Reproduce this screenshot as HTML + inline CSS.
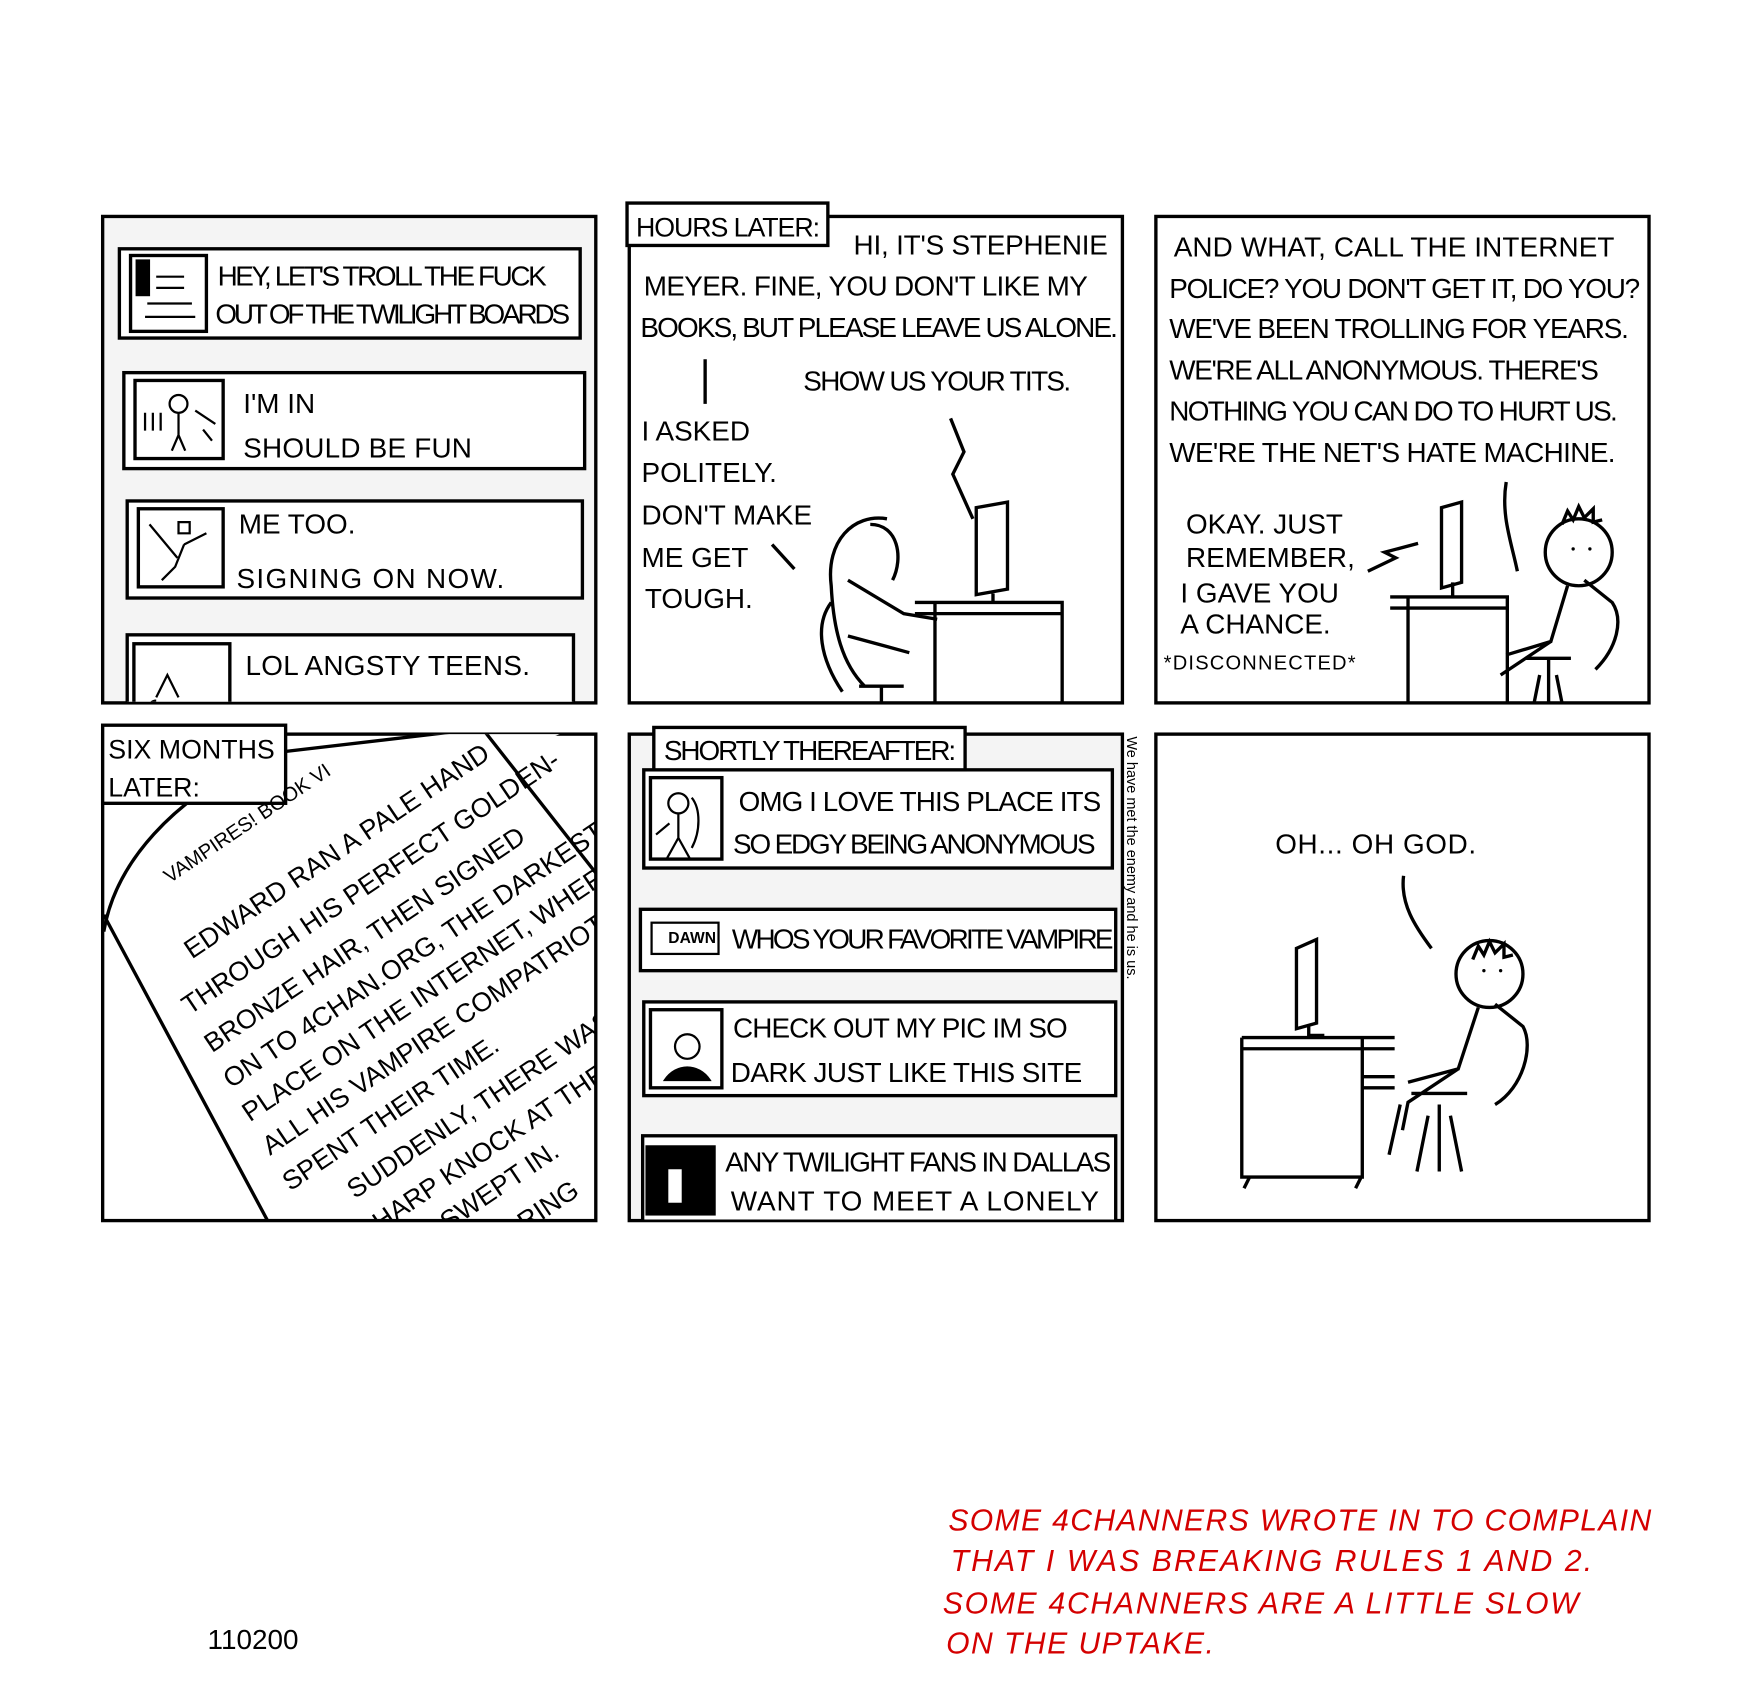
<!DOCTYPE html>
<html><head><meta charset="utf-8"><style>
html,body{margin:0;padding:0;background:#fff;width:1750px;height:1700px;overflow:hidden}
svg{display:block}
text{font-family:"Liberation Sans",sans-serif;fill:#000}
</style></head><body>
<svg width="1750" height="1700" viewBox="0 0 1568.5 1523.7" xmlns="http://www.w3.org/2000/svg">
<defs>
<clipPath id="c4"><rect x="93" y="658" width="441" height="435"/></clipPath>
<clipPath id="c1"><rect x="93" y="194" width="441" height="435"/></clipPath>
<clipPath id="c5"><rect x="565" y="658" width="441" height="435"/></clipPath>
</defs>
<g fill="none" stroke="#000" stroke-width="3">
<rect x="92" y="194" width="442" height="436" fill="#f4f4f4"/>
<g clip-path="url(#c1)">
<rect x="107" y="223" width="413" height="80" fill="#fff"/>
<rect x="117" y="229" width="68" height="68"/>
<rect x="123" y="234" width="10" height="30" fill="#000"/>
<path d="M140 248h25M140 258h25M132 272h40M130 284h45" stroke-width="2"/>
<rect x="111" y="334" width="413" height="86" fill="#fff"/>
<rect x="121" y="341" width="79" height="70"/>
<circle cx="160" cy="362" r="8" stroke-width="2"/><path d="M160 370l0 20l-6 14M160 390l6 14M130 370v16M137 370v16M144 370v16M175 368l18 12M182 385l8 10" stroke-width="2"/>
<rect x="114" y="449" width="408" height="87" fill="#fff"/>
<rect x="124" y="456" width="76" height="70"/>
<path d="M134 470l25 30M160 478h10v-10h-10zM165 488l-8 20l-12 12M165 488l20-10" stroke-width="2"/>
<rect x="114" y="569" width="400" height="70" fill="#fff"/>
<rect x="120" y="577" width="86" height="60"/>
<path d="M140 625l10-20l10 20M140 628c-5 0-8 5-6 10" stroke-width="2"/>
</g>
<rect x="564" y="194" width="442" height="436"/>
<rect x="562" y="182" width="180" height="38" fill="#fff"/>
<path d="M632 322v40M852 375l12 30l-10 20l18 40M692 488l20 22"/>
<path d="M820 540h132v90M838 540v90M820 550h132"/>
<path d="M875 455l28-5v78l-28 5zM890 532v8"/>
<path d="M795 465c-30-5-55 20-50 60c2 40 10 70 30 90M780 470c25 0 30 30 20 50M760 520l50 30l30 5M760 570l55 15M745 540c-15 20-10 50 10 80M770 615h40M790 615v15" />
<rect x="1036" y="194" width="442" height="436"/>
<path d="M1350 432c-5 30 5 55 10 80M1226 512l25-12l-10-5l30-8"/>
<path d="M1246 535h105v95M1262 535v95M1246 545h105"/>
<path d="M1292 455l18-5v72l-18 5zM1302 522v12"/>
<circle cx="1415" cy="495" r="30"/>
<path d="M1405 525l-15 50l-40 12M1390 575l-45 30M1420 520l25 20c10 15 5 40-15 60M1368 590h40M1388 590v40M1375 630l5-25M1400 630l-5-25M1400 470l5-12 5 8 5-12 5 10 8-8 0 12 8-2"/>
<rect x="92" y="658" width="442" height="436"/>
<g clip-path="url(#c4)">
<path d="M93 835c10-60 60-120 150-160l300-35M93 820l150 280" fill="#fff"/>
<path d="M430 650l110 140"/>
</g>
<rect x="92" y="650" width="164" height="70" fill="#fff"/>
<rect x="564" y="658" width="442" height="436" fill="#f4f4f4"/>
<g clip-path="url(#c5)">
<rect x="577" y="690" width="420" height="88" fill="#fff"/>
<rect x="583" y="697" width="64" height="73"/>
<circle cx="608" cy="720" r="9" stroke-width="2"/><path d="M608 729v22l-10 18M608 751l10 18M600 738l-12 10M620 715c8 10 8 30 0 45" stroke-width="2"/>
<rect x="574" y="815" width="426" height="55" fill="#fff"/>
<rect x="584" y="827" width="60" height="28" stroke-width="2"/>
<rect x="577" y="898" width="423" height="84" fill="#fff"/>
<rect x="583" y="905" width="64" height="70"/>
<circle cx="616" cy="938" r="11" stroke-width="2"/><path d="M596 968c10-15 30-15 40 0h-40z" fill="#000" stroke-width="2"/>
<rect x="576" y="1018" width="424" height="90" fill="#fff"/>
<rect x="580" y="1028" width="60" height="60" fill="#000"/>
</g>
<rect x="586" y="652" width="279" height="38" fill="#fff"/>
<rect x="1036" y="658" width="442" height="436"/>
<path d="M1258 785c-3 25 10 45 25 65"/>
<path d="M1113 930h137M1113 940h137M1113 930v125h108v-125M1120 1055l-5 10M1220 1055l-5 10M1222 965h28M1222 975h28"/>
<path d="M1162 850l18-8v75l-18 5zM1173 918v10h14"/>
<circle cx="1335" cy="873" r="30"/>
<path d="M1325 903l-18 55l-45 12M1307 958l-45 30l-5 25M1340 900l25 20c10 18 0 55-25 70M1265 980h50M1290 990v60M1270 1050l10-50M1310 1050l-10-50M1245 1035l10-45M1320 860l5-12 5 8 5-12 5 10 8-8 0 12 8-2"/>
</g>
<circle cx="1330" cy="870" r="1.5"/><circle cx="1345" cy="870" r="1.5"/>
<circle cx="1410" cy="492" r="1.5"/><circle cx="1425" cy="492" r="1.5"/>
<rect x="599" y="1048" width="12" height="30" fill="#fff"/>
<text x="599" y="845" font-size="14" font-weight="bold">DAWN</text>

<g font-size="25">
<text x="195" y="256" textLength="295">HEY, LET'S TROLL THE FUCK</text>
<text x="193" y="290" textLength="318">OUT OF THE TWILIGHT BOARDS</text>
<text x="218" y="370">I'M IN</text>
<text x="218" y="410" textLength="205">SHOULD BE FUN</text>
<text x="214" y="478">ME TOO.</text>
<text x="212" y="527" textLength="240">SIGNING ON NOW.</text>
<text x="220" y="605" textLength="255">LOL ANGSTY TEENS.</text>
<text x="570" y="212" font-size="24" textLength="165">HOURS LATER:</text>
<text x="765" y="228" textLength="228">HI, IT'S STEPHENIE</text>
<text x="577" y="265" textLength="398">MEYER. FINE, YOU DON'T LIKE MY</text>
<text x="574" y="302" textLength="428">BOOKS, BUT PLEASE LEAVE US ALONE.</text>
<text x="720" y="350" textLength="240">SHOW US YOUR TITS.</text>
<text x="575" y="395">I ASKED</text>
<text x="575" y="432">POLITELY.</text>
<text x="575" y="470">DON'T MAKE</text>
<text x="575" y="508">ME GET</text>
<text x="578" y="545">TOUGH.</text>
<text x="1052" y="230" textLength="395">AND WHAT, CALL THE INTERNET</text>
<text x="1048" y="267" textLength="422">POLICE? YOU DON'T GET IT, DO YOU?</text>
<text x="1048" y="303" textLength="412">WE'VE BEEN TROLLING FOR YEARS.</text>
<text x="1048" y="340" textLength="385">WE'RE ALL ANONYMOUS. THERE'S</text>
<text x="1048" y="377" textLength="402">NOTHING YOU CAN DO TO HURT US.</text>
<text x="1048" y="414" textLength="400">WE'RE THE NET'S HATE MACHINE.</text>
<text x="1063" y="478">OKAY. JUST</text>
<text x="1063" y="508">REMEMBER,</text>
<text x="1058" y="540">I GAVE YOU</text>
<text x="1058" y="568">A CHANCE.</text>
<text x="1043" y="600" font-size="18" textLength="172">*DISCONNECTED*</text>
<text x="97" y="680" font-size="24">SIX MONTHS</text>
<text x="97" y="714" font-size="24">LATER:</text>
<g clip-path="url(#c4)" font-size="24">
<text transform="translate(152 792) rotate(-34)" font-size="18">VAMPIRES! BOOK VI</text>
<text transform="translate(172 860) rotate(-34)">EDWARD RAN A PALE HAND</text>
<text transform="translate(170 910) rotate(-34)">THROUGH HIS PERFECT GOLDEN-</text>
<text transform="translate(190 944) rotate(-34)">BRONZE HAIR, THEN SIGNED</text>
<text transform="translate(207 976) rotate(-34)">ON TO 4CHAN.ORG, THE DARKEST</text>
<text transform="translate(224 1006) rotate(-34)">PLACE ON THE INTERNET, WHERE</text>
<text transform="translate(242 1036) rotate(-34)">ALL HIS VAMPIRE COMPATRIOTS</text>
<text transform="translate(260 1068) rotate(-34)">SPENT THEIR TIME.</text>
<text transform="translate(318 1075) rotate(-34)">SUDDENLY, THERE WAS</text>
<text transform="translate(310 1125) rotate(-34)">A SHARP KNOCK AT THE DOOR</text>
<text transform="translate(355 1135) rotate(-34)">SHE SWEPT IN.</text>
<text transform="translate(410 1145) rotate(-34)">A ROARING</text>
</g>
<text x="595" y="681" textLength="262">SHORTLY THEREAFTER:</text>
<g clip-path="url(#c5)">
<text x="662" y="727" textLength="325">OMG I LOVE THIS PLACE ITS</text>
<text x="657" y="765" textLength="325">SO EDGY BEING ANONYMOUS</text>
<text x="656" y="850" textLength="342">WHOS YOUR FAVORITE VAMPIRE</text>
<text x="657" y="930" textLength="300">CHECK OUT MY PIC IM SO</text>
<text x="655" y="970" textLength="315">DARK JUST LIKE THIS SITE</text>
<text x="650" y="1050" textLength="346">ANY TWILIGHT FANS IN DALLAS</text>
<text x="655" y="1085" textLength="330">WANT TO MEET A LONELY</text>
</g>
<text x="1143" y="765" textLength="180">OH... OH GOD.</text>
</g>
<text transform="translate(1010 660) rotate(90)" font-size="13">We have met the enemy and he is us.</text>
<text x="186" y="1478" font-size="25">110200</text>
<g font-size="27" font-style="italic">
<text x="850" y="1372" textLength="630" style="fill:#d40000">SOME 4CHANNERS WROTE IN TO COMPLAIN</text>
<text x="852" y="1408" textLength="575" style="fill:#d40000">THAT I WAS BREAKING RULES 1 AND 2.</text>
<text x="845" y="1446" textLength="570" style="fill:#d40000">SOME 4CHANNERS ARE A LITTLE SLOW</text>
<text x="848" y="1482" textLength="240" style="fill:#d40000">ON THE UPTAKE.</text>
</g>
</svg>
</body></html>
